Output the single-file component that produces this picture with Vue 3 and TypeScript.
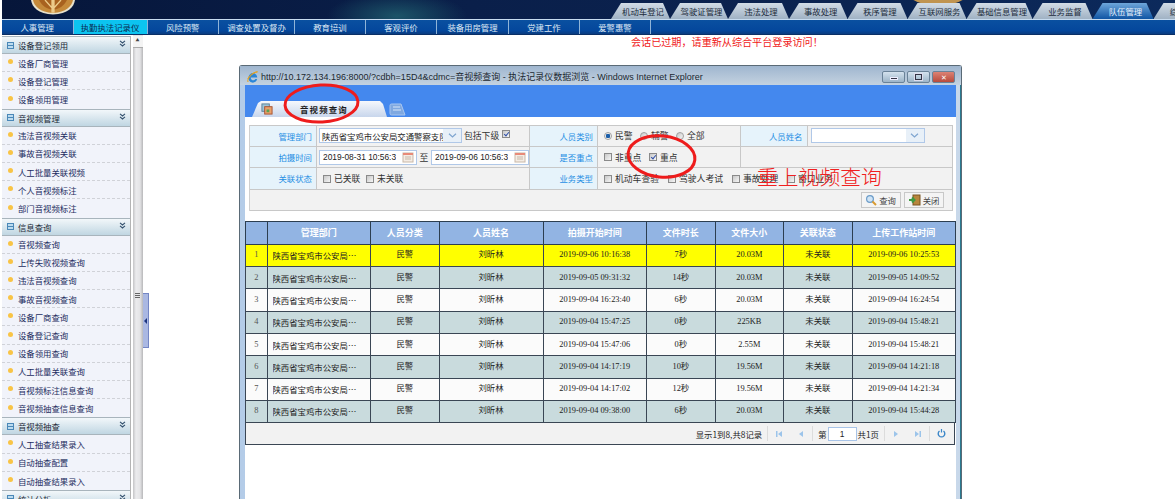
<script setup lang="ts">
interface Tab { label: string; width: number; active?: boolean }
interface Group { title: string; items: string[] }
interface Row { start: string; dur: string; size: string; upload: string }

const topTabs: Tab[] = [
  { label: '机动车登记', width: 59 }, { label: '驾驶证管理', width: 58 }, { label: '违法处理', width: 61 },
  { label: '事故处理', width: 58.5 }, { label: '秩序管理', width: 60 }, { label: '互联网服务', width: 59 },
  { label: '基础信息管理', width: 66 }, { label: '业务监督', width: 60 }, { label: '队伍管理', width: 61, active: true },
  { label: '综合查询', width: 61 }
]
const navItems: Tab[] = [
  { label: '人事管理', width: 71.5 }, { label: '执勤执法记录仪', width: 74, active: true }, { label: '风险预警', width: 71.5 },
  { label: '调查处置及督办', width: 76 }, { label: '教育培训', width: 71 }, { label: '客观评价', width: 71 },
  { label: '装备用房管理', width: 72 }, { label: '党建工作', width: 71 }, { label: '爱警惠警', width: 71 }
]
const groups: Group[] = [
  { title: '设备登记领用', items: ['设备厂商管理', '设备登记管理', '设备领用管理'] },
  { title: '音视频管理', items: ['违法音视频关联', '事故音视频关联', '人工批量关联视频', '个人音视频标注', '部门音视频标注'] },
  { title: '信息查询', items: ['音视频查询', '上传失败视频查询', '违法音视频查询', '事故音视频查询', '设备厂商查询', '设备登记查询', '设备领用查询', '人工批量关联查询', '音视频标注信息查询', '音视频抽查信息查询'] },
  { title: '音视频抽查', items: ['人工抽查结果录入', '自动抽查配置', '自动抽查结果录入'] },
  { title: '统计分析', items: [] }
]
const headers = ['', '管理部门', '人员分类', '人员姓名', '拍摄开始时间', '文件时长', '文件大小', '关联状态', '上传工作站时间']
const rows: Row[] = [
  { start: '2019-09-06 10:16:38', dur: '7秒', size: '20.03M', upload: '2019-09-06 10:25:53' },
  { start: '2019-09-05 09:31:32', dur: '14秒', size: '20.03M', upload: '2019-09-05 14:09:52' },
  { start: '2019-09-04 16:23:40', dur: '6秒', size: '20.03M', upload: '2019-09-04 16:24:54' },
  { start: '2019-09-04 15:47:25', dur: '0秒', size: '225KB', upload: '2019-09-04 15:48:21' },
  { start: '2019-09-04 15:47:06', dur: '0秒', size: '2.55M', upload: '2019-09-04 15:48:21' },
  { start: '2019-09-04 14:17:19', dur: '10秒', size: '19.56M', upload: '2019-09-04 14:21:18' },
  { start: '2019-09-04 14:17:02', dur: '12秒', size: '19.56M', upload: '2019-09-04 14:21:34' },
  { start: '2019-09-04 09:38:00', dur: '6秒', size: '20.03M', upload: '2019-09-04 15:44:28' }
]
</script>

<template>
  <div class="page">
    <header class="top">
      <svg class="emblem" viewBox="0 0 46 15" width="46" height="15">
        <path d="M1 0 C2 7 8 14 23 14.500 C38 14 44 7 45 0 Z" fill="#e8e2cc" />
        <path d="M3 0 C4 6 10 12.500 23 13 C36 12.500 42 6 43 0 Z" fill="#c58a3a" />
        <path d="M9 0 C12 6 17 9 23 10 C29 9 34 6 37 0 Z" fill="#a8621f" />
        <path d="M22 0H24V12H22ZM15 0 23 9M31 0 23 9" stroke="#eccb8a" stroke-width="1.300" fill="#eccb8a" />
      </svg>
      <span class="emblem-mid"></span>
      <div class="top-tabs">
        <div v-for="t in topTabs" :key="t.label" class="top-tab" :class="{ active: t.active }" :style="{ width: t.width + 'px' }">
          <span>{{ t.label }}</span>
        </div>
      </div>
    </header>
    <nav class="nav">
      <div v-for="n in navItems" :key="n.label" class="nav-item" :class="{ active: n.active }" :style="{ width: n.width + 'px' }">{{ n.label }}</div>
    </nav>
    <div class="notice">会话已过期，请重新从综合平台登录访问！</div>

    <div class="body">
      <aside class="side">
        <section v-for="g in groups" :key="g.title">
          <div class="group-head">
            <span class="group-icon"></span>
            <span class="group-title">{{ g.title }}</span>
            <svg class="chev" width="7" height="7" viewBox="0 0 7 7"><path d="M1 .8 3.500 3 6 .8M1 3.800 3.500 6 6 3.800" fill="none" stroke="#33506e" stroke-width="1.100" /></svg>
          </div>
          <div v-for="i in g.items" :key="i" class="side-item"><span class="dot"></span>{{ i }}</div>
        </section>
      </aside>
      <div class="scroll">
        <div class="scroll-arrow">▲</div>
        <div class="thumb"><span class="grip"></span></div>
      </div>
      <div class="splitter-col">
        <div class="splitter"><span class="split-arrow"></span></div>
      </div>

      <main class="main">
        <div class="window">
          <div class="titlebar">
            <svg class="ie" width="12" height="12" viewBox="0 0 12 12">
              <path d="M1.500 6.500A4.300 4.300 0 0 1 10.300 6.500H3.800A2.400 2.400 0 0 0 8.300 8H10.200A4.400 4.400 0 0 1 1.500 6.500Z" fill="#2b86d8" />
              <path d="M1 11C-.5 8 5 2 10.500 .8 8 .8 3 3 .7 8" fill="none" stroke="#e8a21c" stroke-width="1" />
            </svg>
            <span class="title-text">http://10.172.134.196:8000/?cdbh=15D4&amp;cdmc=音视频查询 - 执法记录仪数据浏览 - Windows Internet Explorer</span>
            <div class="win-btns">
              <span class="win-btn"><i class="min"></i></span>
              <span class="win-btn"><i class="max"></i></span>
              <span class="win-btn close">✕</span>
            </div>
          </div>
          <div class="content">
            <div class="band">
              <div class="tab-main">
                <svg width="12" height="12" viewBox="0 0 13 13">
                  <rect x="1" y="1" width="8" height="8" fill="#9cc4d8" stroke="#5a7f96" />
                  <rect x="4" y="4" width="8" height="8" fill="#e8a06a" stroke="#a8502e" />
                  <rect x="6" y="7" width="3" height="3" fill="#5aa050" />
                </svg>
                <b>音视频查询</b>
              </div>
              <svg class="tab-mini" width="17" height="13" viewBox="0 0 17 13">
                <path d="M1 2.500Q1 1 2.500 1H12L16 12H2.500Q1 12 1 10.500Z" fill="#7fa8e0" stroke="#a8c6f0" />
                <path d="M4 4H11M4 7H12" stroke="#d8e6f8" />
              </svg>
            </div>

            <div class="form">
              <label class="lbl">管理部门</label>
              <div class="val">
                <div class="combo wide"><span class="combo-text">陕西省宝鸡市公安局交通警察支队</span><span class="combo-btn"><svg width="9" height="5" viewBox="0 0 9 5"><path d="M1 .8 4.500 4 8 .8" fill="none" stroke="#7fa5d0" stroke-width="1.200" /></svg></span></div>
                <span class="txt inc">包括下级</span><span class="chk on inc-chk"></span>
              </div>
              <label class="lbl">人员类别</label>
              <div class="val opts">
                <span class="radio on"></span><span class="txt w18">民警</span>
                <span class="radio"></span><span class="txt w18">辅警</span>
                <span class="radio"></span><span class="txt">全部</span>
              </div>
              <label class="lbl">人员姓名</label>
              <div class="val">
                <div class="combo name"><span class="combo-text"></span><span class="combo-btn"><svg width="9" height="5" viewBox="0 0 9 5"><path d="M1 .8 4.500 4 8 .8" fill="none" stroke="#7fa5d0" stroke-width="1.200" /></svg></span></div>
              </div>

              <label class="lbl">拍摄时间</label>
              <div class="val">
                <div class="date"><span class="date-text">2019-08-31 10:56:3</span><svg width="12" height="12" viewBox="0 0 12 12"><rect x="1" y="2" width="10" height="9" fill="#f4ece4" stroke="#c8b8a8" /><rect x="1" y="2" width="10" height="2" fill="#e88a78" /><path d="M3 6H9M3 8H9" stroke="#c8b8a8" /></svg></div>
                <span class="txt to">至</span>
                <div class="date"><span class="date-text">2019-09-06 10:56:3</span><svg width="12" height="12" viewBox="0 0 12 12"><rect x="1" y="2" width="10" height="9" fill="#f4ece4" stroke="#c8b8a8" /><rect x="1" y="2" width="10" height="2" fill="#e88a78" /><path d="M3 6H9M3 8H9" stroke="#c8b8a8" /></svg></div>
              </div>
              <label class="lbl">是否重点</label>
              <div class="val opts">
                <span class="chk"></span><span class="txt w27">非重点</span>
                <span class="chk on"></span><span class="txt">重点</span>
              </div>
              <div class="val blank"></div>

              <label class="lbl">关联状态</label>
              <div class="val opts first">
                <span class="chk"></span><span class="txt w26">已关联</span>
                <span class="chk"></span><span class="txt">未关联</span>
              </div>
              <label class="lbl">业务类型</label>
              <div class="val opts span3">
                <span class="chk"></span><span class="txt w45">机动车查验</span>
                <span class="chk"></span><span class="txt w45">驾驶人考试</span>
                <span class="chk"></span><span class="txt w43">事故处理</span>
                <span class="chk"></span><span class="txt">窗口业务</span>
              </div>

              <div class="actions">
                <button class="btn">
                  <svg width="12" height="12" viewBox="0 0 12 12"><circle cx="5" cy="5" r="3.400" fill="#cfe4f6" stroke="#6c9cc8" stroke-width="1.200" /><path d="M7.500 7.500 11 11" stroke="#d89a30" stroke-width="2" /></svg>
                  查询
                </button>
                <button class="btn">
                  <svg width="13" height="12" viewBox="0 0 13 12"><rect x="5" y="1" width="7" height="10" fill="#b8863c" stroke="#7a5520" /><path d="M1 6H6M4 3.500 6.500 6 4 8.500" fill="none" stroke="#3f9a40" stroke-width="2" /></svg>
                  关闭
                </button>
              </div>
            </div>

            <div class="grid-wrap">
              <table class="grid">
                <colgroup>
                  <col class="c0" /><col class="c1" /><col class="c2" /><col class="c3" /><col class="c4" /><col class="c5" /><col class="c6" /><col class="c7" /><col class="c8" />
                </colgroup>
                <thead>
                  <tr><th v-for="(h, idx) in headers" :key="idx">{{ h }}</th></tr>
                </thead>
                <tbody>
                  <tr v-for="(r, idx) in rows" :key="idx" :class="{ hit: idx === 0, alt: idx > 0 && idx % 2 === 1 }">
                    <td class="num">{{ idx + 1 }}</td>
                    <td class="dept"><span>陕西省宝鸡市公安局交通警察支队</span></td>
                    <td>民警</td>
                    <td>刘昕林</td>
                    <td>{{ r.start }}</td>
                    <td>{{ r.dur }}</td>
                    <td>{{ r.size }}</td>
                    <td>未关联</td>
                    <td>{{ r.upload }}</td>
                  </tr>
                </tbody>
              </table>
              <div class="pager">
                <span class="pg-info">显示1到8,共8记录</span>
                <i class="sep"></i>
                <svg class="pg" width="8" height="8" viewBox="0 0 8 8"><path d="M1 1H2.500V7H1ZM7 1V7L3 4Z" fill="#9cc4ea" /></svg>
                <svg class="pg" width="8" height="8" viewBox="0 0 8 8"><path d="M6 1V7L2 4Z" fill="#9cc4ea" /></svg>
                <i class="sep"></i>
                <span class="pg-txt">第</span>
                <span class="pg-input">1</span>
                <span class="pg-txt after">共1页</span>
                <i class="sep"></i>
                <svg class="pg" width="8" height="8" viewBox="0 0 8 8"><path d="M2 1V7L6 4Z" fill="#9cc4ea" /></svg>
                <svg class="pg" width="8" height="8" viewBox="0 0 8 8"><path d="M1 1V7L5 4ZM5.500 1H7V7H5.500Z" fill="#9cc4ea" /></svg>
                <i class="sep"></i>
                <svg class="pg" width="9" height="9" viewBox="0 0 9 9"><path d="M6.500 2A3.300 3.300 0 1 1 2.500 2" fill="none" stroke="#3a86c8" stroke-width="1.400" /><path d="M4.500 0V3.500" stroke="#3a86c8" stroke-width="1.200" /></svg>
              </div>
            </div>
          </div>
        </div>
      </main>
    </div>

    <svg class="marks" width="1175" height="499" viewBox="0 0 1175 499">
      <ellipse cx="321.500" cy="103.500" rx="36.500" ry="18.500" transform="rotate(-3 321.500 103.500)" fill="none" stroke="#ee1c1c" stroke-width="3" />
      <ellipse cx="661.500" cy="156.500" rx="33.500" ry="20.500" transform="rotate(6 661.500 156.500)" fill="none" stroke="#ee1c1c" stroke-width="3" />
    </svg>
    <div class="remark">重上视频查询</div>
  </div>
</template>

<style>
html, body { margin: 0; background: #fff; }
</style>

<style scoped>
.page {
  position: relative;
  width: 1175px;
  height: 499px;
  overflow: hidden;
  padding-left: 2px;
  box-sizing: border-box;
  background: #fff;
  font-family: "Noto Sans CJK SC", "Liberation Sans", sans-serif;
  font-size: 8.400px;
  color: #333;
}
.top {
  position: relative;
  height: 19px;
  display: flex;
  overflow: hidden;
  background:
    radial-gradient(ellipse 70px 24px at 395px 16px, #1c5468 0%, rgba(28, 84, 104, 0) 100%),
    linear-gradient(90deg, #06163a 0%, #0a1f4a 40%, #0b2350 70%, #0c2a5c 100%);
}
.emblem { position: absolute; left: 28px; top: 0; }
.emblem-mid {
  position: absolute;
  left: 910px;
  top: -10px;
  width: 52px;
  height: 15px;
  border-radius: 50%;
  background: #c09450;
}
.top-tabs { display: flex; margin-left: 609px; flex: none; position: relative; }
.top-tab {
  height: 16px;
  margin-top: 3px;
  flex: none;
  display: flex;
  align-items: center;
  justify-content: center;
  padding-left: 5px;
  box-sizing: border-box;
  clip-path: polygon(10px 0, calc(100% - 7px) 0, 100% 100%, 0 100%);
  background: linear-gradient(#d2dce6, #a0b2c4);
  color: #1c2c3c;
  white-space: nowrap;
}
.top-tab.active { background: linear-gradient(#6ea6da, #0f55a4); color: #e8f2fc; }
.nav {
  height: 16px;
  display: flex;
  border-top: 1px solid #c8dcf0;
  border-bottom: 1px solid #0a2f66;
  background: linear-gradient(#0a50a0, #04479c 75%, #0a3c80);
  box-sizing: border-box;
}
.nav-item {
  flex: none;
  height: 100%;
  line-height: 14px;
  text-align: center;
  color: #dde8f4;
  border-right: 1px solid #8fb4d8;
  box-sizing: border-box;
}
.nav-item.active { background: #0cc4f0; color: #0a2a50; }
.notice {
  position: absolute;
  left: 631px;
  top: 36px;
  font-size: 10.100px;
  line-height: 12px;
  color: #f01818;
  white-space: nowrap;
}
.body { display: flex; height: 464px; }
.side {
  width: 128px;
  flex: none;
  margin-top: 1px;
  overflow: hidden;
  border-right: 1px solid #b4b4b4;
  box-sizing: content-box;
  background: #f1f3fa;
}
.group-head {
  height: 18px;
  box-sizing: border-box;
  display: flex;
  align-items: center;
  padding-left: 5px;
  background: linear-gradient(#f2f7fa, #c0d6e2);
  border-top: 1px solid #a8b4bc;
  border-bottom: 1px solid #a8b4bc;
  color: #1c2a38;
}
.group-icon {
  width: 5px;
  height: 5px;
  border: 1px solid #4a88b8;
  background: linear-gradient(#bcdcf0 40%, #4a88b8 40%, #4a88b8 60%, #bcdcf0 60%);
  margin-right: 4px;
}
.group-title { flex: 1; }
.chev { margin-right: 4px; margin-top: -3px; }
.side-item {
  height: 18.200px;
  box-sizing: border-box;
  display: flex;
  align-items: center;
  padding-left: 6px;
  color: #1c2c60;
  border-bottom: 1px dashed #d0d2d8;
}
.side-item:last-child { border-bottom: none; }
.dot {
  width: 5px;
  height: 5px;
  border-radius: 50%;
  background: #f8c446;
  margin-right: 5px;
  margin-top: -2px;
}
.scroll {
  width: 10px;
  margin-left: 1.500px;
  flex: none;
  display: flex;
  flex-direction: column;
  overflow: hidden;
  background: #e4e4e6;
}
.scroll-arrow {
  height: 11px;
  margin-top: 1px;
  flex: none;
  font-size: 4px;
  line-height: 9px;
  text-align: center;
  color: #444;
  background: #f4f4f4;
}
.thumb {
  height: 494px;
  flex: none;
  display: flex;
  align-items: center;
  justify-content: center;
  background: linear-gradient(90deg, #c4c4c6, #ececee 30%, #e4e4e6 70%, #b8b8ba);
  border-top: 1px solid #aaa;
}
.grip {
  width: 5px;
  height: 5px;
  background: repeating-linear-gradient(#666 0 1px, transparent 1px 2px);
}
.splitter-col { flex: none; width: 6px; }
.splitter {
  height: 55px;
  margin-top: 258px;
  box-sizing: border-box;
  background: #aab8e2;
  border: 1px solid #7486c4;
  border-left: none;
  display: flex;
  align-items: center;
}
.split-arrow { border: 3px solid transparent; border-right-color: #1c3480; border-left: none; margin-left: 1px; }
.main { flex: 1; min-width: 0; padding: 30px 0 0 90.500px; }
.window {
  width: 723px;
  height: 434px;
  box-sizing: border-box;
  border: 1px solid #5a6a76;
  border-bottom: none;
  border-radius: 3px 3px 0 0;
  background: linear-gradient(90deg, #b4cce8, #c8d8ea);
  padding: 0 5px;
  display: flex;
  flex-direction: column;
  box-shadow: inset -1px 0 0 #2a7a90;
}
.titlebar {
  height: 19px;
  flex: none;
  margin: 0 -5px;
  padding: 2px 6px 0 7px;
  box-sizing: border-box;
  display: flex;
  align-items: center;
  background: linear-gradient(#9fb6cf, #c4d2e0);
  color: #202830;
}
.ie { margin-right: 2px; flex: none; }
.title-text {
  font-family: "Liberation Sans", "Noto Sans CJK SC", sans-serif;
  font-size: 9px;
  white-space: nowrap;
  flex: 1;
}
.win-btns { display: flex; gap: 2px; }
.win-btn {
  width: 21px;
  height: 10px;
  border: 1px solid #6a8298;
  border-radius: 2px;
  background: linear-gradient(#d4e2ee, #9cb4c8);
  display: flex;
  align-items: center;
  justify-content: center;
}
.win-btn.close { background: linear-gradient(#dc8274, #b84a3c); color: #fff; font-size: 7px; line-height: 10px; }
.win-btn .min { width: 6px; height: 1px; margin-top: 3px; background: #334; border: 1px solid #eef; }
.win-btn .max { width: 5px; height: 4px; border: 1px solid #334; outline: 1px solid #dde; }
.content {
  flex: 1;
  background: #fff;
  min-height: 0;
  overflow: hidden;
}
.band {
  height: 32px;
  box-sizing: border-box;
  background: #4488ee;
  display: flex;
  align-items: flex-end;
  padding-left: 7px;
}
.tab-main {
  width: 135px;
  height: 16px;
  box-sizing: border-box;
  padding-left: 9px;
  display: flex;
  align-items: center;
  background: linear-gradient(#f6f8fc, #c8d6ec);
  clip-path: polygon(0 100%, 6px 2px, 9px 0, 128px 0, 131px 3px, 135px 100%);
}
.tab-main b { margin-left: 27px; letter-spacing: 1.200px; color: #1a1a1a; font-size: 8.400px; }
.tab-mini { margin-left: 2px; margin-bottom: 1px; }
.form {
  margin: 8px 3.500px 0 3.500px;
  display: grid;
  grid-template-columns: 67.500px 213px 68px 143px 66.500px 1fr;
  grid-template-rows: 20.700px 21.700px 21.700px 20.700px;
  border-top: 1px solid #c8c8c8;
  border-left: 1px solid #d0d0d0;
  background: #f2f2f2;
  box-sizing: border-box;
}
.lbl {
  background: #e6f3fb;
  color: #1f8fe4;
  text-align: right;
  padding-right: 4px;
  line-height: 20px;
  border-right: 1px solid #c8c8c8;
  border-bottom: 1px solid #c8c8c8;
  overflow: hidden;
}
.val {
  display: flex;
  align-items: center;
  padding-left: 2px;
  min-width: 0;
  border-right: 1px solid #c8c8c8;
  border-bottom: 1px solid #c8c8c8;
}
.opts { padding-left: 6px; }
.first { padding-left: 6px; }
.blank { grid-column: span 2; }
.span3 { grid-column: span 3; }
.actions {
  grid-column: 1 / -1;
  display: flex;
  justify-content: flex-end;
  align-items: center;
  gap: 3px;
  padding-right: 8px;
  border-right: 1px solid #c8c8c8;
  border-bottom: 1px solid #c8c8c8;
}
.txt { white-space: nowrap; color: #333; font-size: 8.800px; }
.inc { margin-left: 2px; }
.inc-chk { margin-left: 3px; margin-top: -4px; }
.w18 { width: 25px; }
.w27 { width: 34px; }
.w26 { width: 32px; }
.w45 { width: 53px; }
.w43 { width: 44px; }
.to { width: 15px; text-align: center; }
.chk, .radio {
  flex: none;
  width: 8px;
  height: 8px;
  box-sizing: border-box;
  border: 1px solid #8a8a8a;
  background: linear-gradient(135deg, #c8c8c8, #f6f6f6);
  margin-right: 3px;
  position: relative;
}
.radio { border-radius: 50%; border-color: #a0a0a0; }
.radio.on { background: radial-gradient(circle, #1c5ea8 0 2px, #f0f0f0 2.500px); }
.chk.on::after {
  content: "";
  position: absolute;
  left: 1.500px;
  top: 0;
  width: 2px;
  height: 4px;
  border: solid #3050a8;
  border-width: 0 1.300px 1.300px 0;
  transform: rotate(40deg);
}
.combo, .date {
  display: flex;
  align-items: center;
  height: 15px;
  box-sizing: border-box;
  border: 1px solid #b0c8e8;
  background: #fff;
  overflow: hidden;
  flex: none;
}
.wide { width: 143px; }
.name { width: 114px; margin-left: 1px; }
.combo-text { flex: 1; min-width: 0; padding-left: 2px; white-space: nowrap; overflow: hidden; color: #222; }
.combo-btn {
  width: 18px;
  height: 100%;
  flex: none;
  background: #e8f0f8;
  display: flex;
  align-items: center;
  justify-content: center;
}
.date { width: 98px; justify-content: space-between; padding-right: 2px; }
.date-text {
  font-family: "Liberation Sans", sans-serif;
  padding-left: 3px;
  white-space: nowrap;
  overflow: hidden;
  color: #222;
}
.btn {
  width: 40px;
  height: 16px;
  padding: 0;
  display: flex;
  align-items: center;
  justify-content: center;
  gap: 2px;
  font: inherit;
  color: #444;
  background: #f4f4f4;
  border: 1px solid #c8c8c8;
}
.grid-wrap { margin: 10px 0 0 0; width: 710px; }
.grid {
  width: 710px;
  table-layout: fixed;
  border-collapse: collapse;
  font-family: "Liberation Serif", "Noto Sans CJK SC", serif;
  border: 1px solid #3a4654;
  border-bottom: none;
}
.c0 { width: 21.500px; } .c1 { width: 103.500px; } .c2 { width: 68.500px; } .c3 { width: 104px; }
.c4 { width: 103.500px; } .c5 { width: 68.700px; } .c6 { width: 68.300px; } .c7 { width: 68.700px; } .c8 { width: 103.300px; }
.grid th {
  height: 22px;
  padding: 0;
  line-height: 12px;
  background: #92b4e3;
  color: #fff;
  font-family: "Noto Sans CJK SC", sans-serif;
  font-weight: 700;
  font-size: 9px;
  border: 1px solid #2c3e50;
}
.grid td {
  height: 21.300px;
  padding: 0;
  line-height: 12px;
  text-align: center;
  color: #222;
  background: #fbfbfb;
  border: 1px solid #3a4654;
  white-space: nowrap;
  overflow: hidden;
}
.grid tr.alt td { background: #c9dbdd; }
.grid tr.hit td { background: #ffff00; }
.grid td.num { color: #555; }
.grid td.dept { padding: 0 6px 0 5px; text-align: left; }
.dept span { display: block; overflow: hidden; text-overflow: ellipsis; white-space: nowrap; font-family: "Noto Sans CJK SC", sans-serif; }
.pager {
  height: 22px;
  box-sizing: border-box;
  display: flex;
  align-items: center;
  justify-content: flex-end;
  padding-right: 1px;
  background: #f2f2f2;
  border: 1px solid #3a4654;
  border-top: none;
  color: #222;
}
.pg-info { margin-right: 5px; }
.sep { width: 1px; height: 15px; background: #dcdcdc; flex: none; }
.pg { margin: 0 7px; flex: none; }
.pg-txt { margin: 0 1px 0 5px; }
.pg-txt.after { margin: 0 5px 0 1px; }
.pg-input {
  width: 29px;
  height: 14px;
  line-height: 12px;
  box-sizing: border-box;
  text-align: center;
  background: #fff;
  border: 1px solid #a8c4e8;
  font-family: "Liberation Sans", sans-serif;
}
.marks { position: absolute; left: 0; top: 0; pointer-events: none; }
.remark {
  position: absolute;
  left: 757px;
  top: 162px;
  font-size: 20.800px;
  line-height: 28px;
  font-weight: 300;
  color: #f02020;
  white-space: nowrap;
}
</style>
